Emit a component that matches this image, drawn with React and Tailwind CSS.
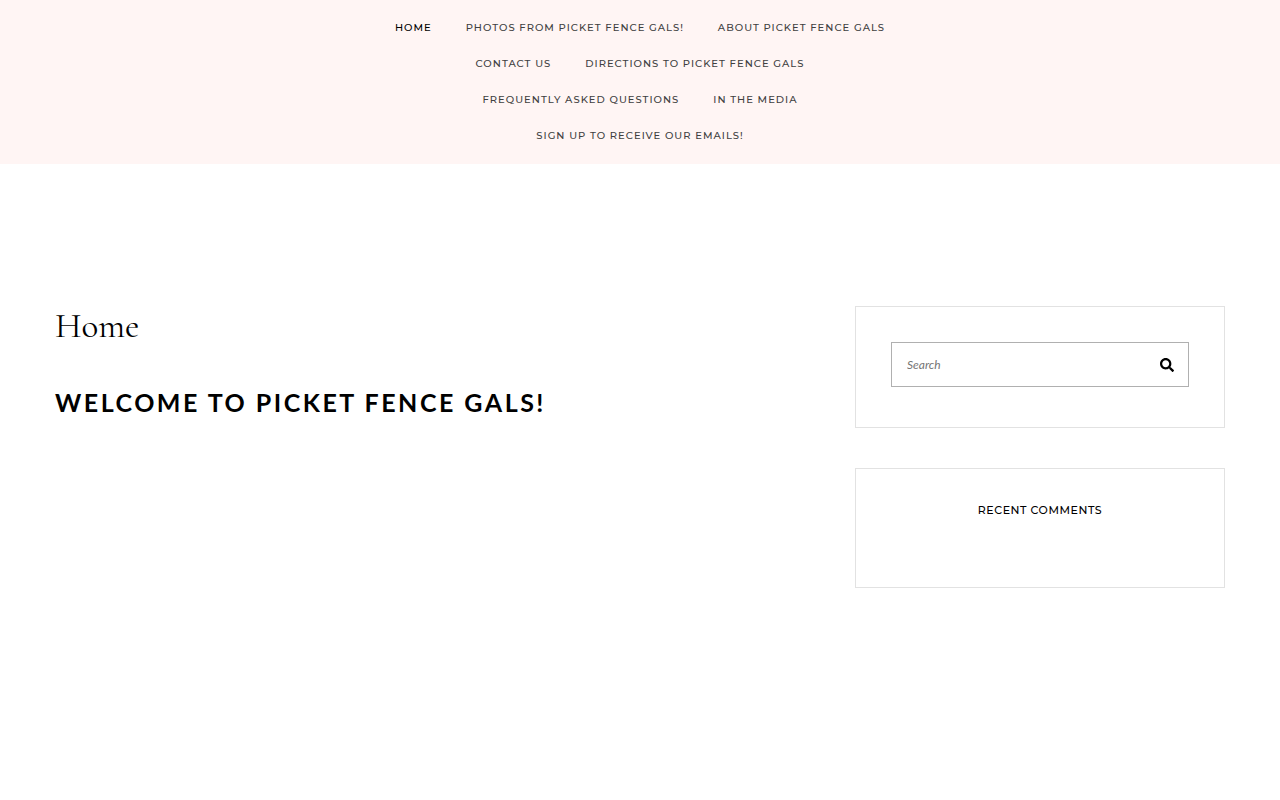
import React, { useState } from 'react';
import { FaSearch } from 'react-icons/fa';

const navItems = [
  { label: 'Home', href: '#home', active: true },
  { label: 'Photos from Picket Fence Gals!', href: '#photos' },
  { label: 'About Picket Fence Gals', href: '#about' },
  { label: 'Contact Us', href: '#contact' },
  { label: 'Directions to Picket Fence Gals', href: '#directions' },
  { label: 'Frequently Asked Questions', href: '#faq' },
  { label: 'In the Media', href: '#media' },
  { label: 'Sign up to receive our Emails!', href: '#signup' },
];

function Header() {
  return (
    <header className="bg-[#fff5f4] px-4 py-[10px]">
      <nav>
        <ul className="mx-auto flex max-w-[540px] flex-wrap justify-center gap-x-[34px]">
          {navItems.map((item) => (
            <li key={item.href}>
              <a
                href={item.href}
                className={`block font-['Montserrat','Inter',sans-serif] text-[10px] leading-9 font-medium tracking-[1px] uppercase hover:text-black ${
                  item.active ? 'text-black' : 'text-[#404040]'
                }`}
              >
                {item.label}
              </a>
            </li>
          ))}
        </ul>
      </nav>
    </header>
  );
}

function SearchWidget() {
  const [query, setQuery] = useState('');

  return (
    <section className="border border-[#e2e2e2] px-[35px] pt-[35px] pb-10">
      <form
        role="search"
        onSubmit={(e) => e.preventDefault()}
        className="flex h-[45px] items-center border border-[#b0b0b0]"
      >
        <input
          type="search"
          aria-label="Search"
          placeholder="Search"
          value={query}
          onChange={(e) => setQuery(e.target.value)}
          className="h-full min-w-0 flex-1 pl-[15px] text-xs text-black italic outline-none placeholder:text-[#757575]"
        />
        <button type="submit" aria-label="Submit search" className="px-[14px] text-sm text-black">
          <FaSearch />
        </button>
      </form>
    </section>
  );
}

function RecentComments() {
  return (
    <section className="border border-[#e2e2e2] px-[35px] pt-8 pb-[68px]">
      <h2 className="text-center font-['Montserrat','Inter',sans-serif] text-[11px] leading-[18px] font-medium tracking-wider text-black uppercase">
        Recent Comments
      </h2>
    </section>
  );
}

export default function App() {
  return (
    <div className="min-h-screen bg-white font-['Lato',sans-serif]">
      <Header />
      <div className="mx-auto flex max-w-[1202px] flex-col gap-10 px-4 pt-[142px] pb-20 lg:flex-row">
        <main className="min-w-0 flex-1">
          <h1 className="font-['Cormorant_Garamond','Liberation_Serif',serif] text-[35px] leading-10 text-black">
            Home
          </h1>
          <p className="mt-10 text-[25px] leading-8 font-bold tracking-widest text-black uppercase">
            Welcome to Picket Fence Gals!
          </p>
        </main>
        <aside className="flex w-full flex-col gap-10 lg:w-[370px]">
          <SearchWidget />
          <RecentComments />
        </aside>
      </div>
    </div>
  );
}
